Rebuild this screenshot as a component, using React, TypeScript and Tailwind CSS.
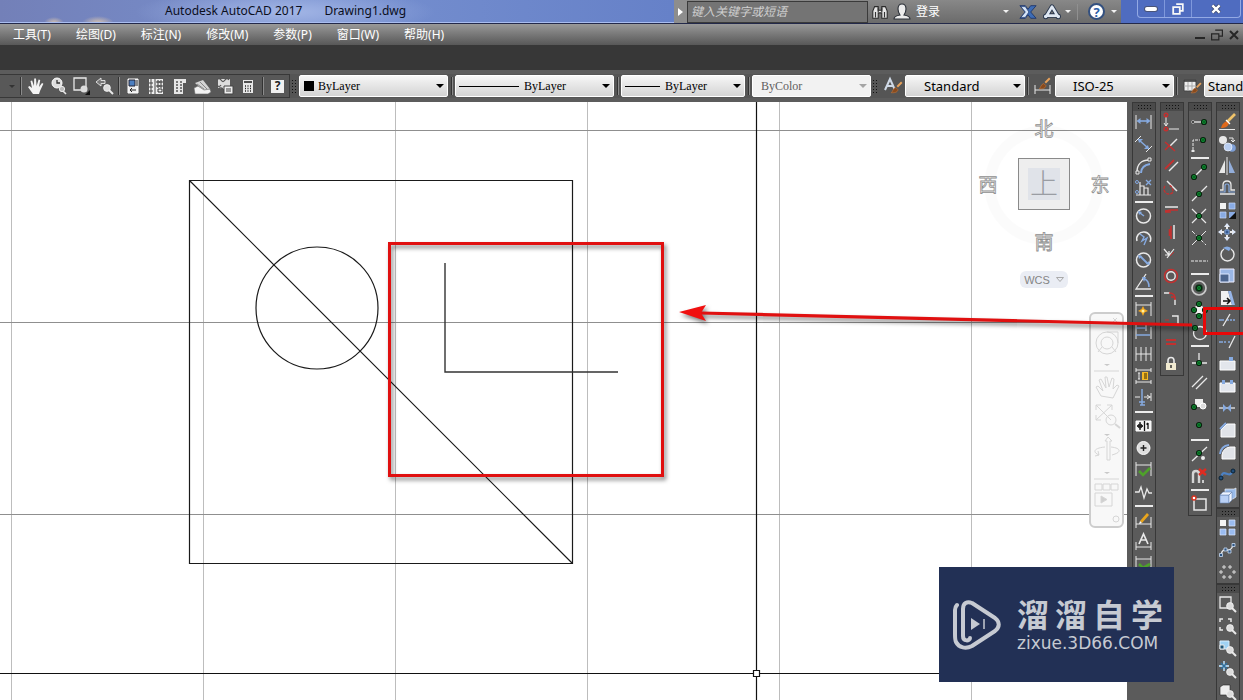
import React from "react";

type Icon = { name: string; art: React.ReactNode };
type Item = Icon | "sep";

const W = "#e9e9e9";
const B = "#86aae0";
const R = "#c4302f";

const Node = ({ x, y }: { x: number; y: number }) => (
  <g>
    <circle cx={x} cy={y} r="2.5" fill="#0c9a35" stroke="#08210d" strokeWidth="1.2" />
    <circle cx={x} cy={y} r="0.8" fill="#08210d" />
  </g>
);

const Lens = ({ x = 12, y = 12 }: { x?: number; y?: number }) => (
  <g>
    <path d={`M${x + 2} ${y + 2}l4 4`} stroke={W} strokeWidth="2" />
    <circle cx={x} cy={y} r="3.4" fill="#dcdcdc" stroke="#f6f6f6" strokeWidth="0.8" />
  </g>
);

const Brush = () => (
  <g>
    <path d="M11 9l6-6" stroke="#e9a25a" strokeWidth="2.6" />
    <path d="M3 17c2-1 2-6 6-7l3 3c-1 4-5 4-9 4z" fill="#8a4a1c" stroke="#b5703a" strokeWidth="1" />
  </g>
);

const Ticks = ({ top = 3, bottom = 17 }: { top?: number; bottom?: number }) => (
  <path d={`M2 ${top}V${bottom}M17 ${top}V${bottom}`} stroke={W} />
);

const dimension: Item[] = [
  { name: "线性", art: <><Ticks /><path d="M4 9h11" stroke={B} strokeWidth="1.6" /><path d="M2.500 9l4-3v6zM16.500 9l-4-3v6z" fill={B} /></> },
  { name: "对齐", art: <><path d="M1 8l6-6M12 18l6-6" stroke={W} /><path d="M5 6l9 8" stroke={B} strokeWidth="1.5" /><path d="M4 5h5l-4 4zM15 15h-5l4-4z" fill={B} /></> },
  { name: "弧长", art: <><path d="M3 16C3 8 8 4 15 4" stroke={W} strokeWidth="1.4" /><path d="M7 17c0-5 3-8 9-9" stroke={B} strokeWidth="2" /><path d="M2 15h3v3H2zM14 2h3v3h-3z" fill="#555" stroke={W} /></> },
  { name: "坐标", art: <><path d="M6 4v13h11M6 8h4v9M10 10h4v7M2 17h4" stroke={W} strokeWidth="1.2" /><path d="M12 2l5 5M17 2l-5 5" stroke={B} strokeWidth="1.3" /><circle cx="3" cy="4" r="1.5" stroke={B} /><circle cx="3" cy="14" r="1.5" stroke={B} /></> },
  "sep",
  { name: "半径", art: <><circle cx="9.500" cy="10" r="7" stroke={W} strokeWidth="1.5" /><path d="M10 10L6 7" stroke={B} strokeWidth="1.5" /><path d="M4 5l4 1-3 3z" fill={B} /></> },
  { name: "折弯", art: <><path d="M3 13A7 7 0 1 1 16 14" stroke={W} strokeWidth="1.5" /><path d="M6 6l4 3-2 4 5-3-3 7" stroke={B} strokeWidth="1.4" /></> },
  { name: "直径", art: <><circle cx="9.500" cy="10" r="7" stroke={W} strokeWidth="1.5" /><path d="M6 6l8 8" stroke={B} strokeWidth="1.8" /><path d="M4 5l4 1-3 3zM16 15l-4-1 3-3z" fill={B} /></> },
  { name: "角度", art: <><path d="M12 2L2 17h15" stroke={W} strokeWidth="1.3" /><path d="M10 7c4 1 5 4 5 8" stroke={B} strokeWidth="1.6" /><path d="M8 5h4l-2 5z" fill={B} /></> },
  "sep",
  { name: "快速标注", art: <><Ticks top={2} bottom={16} /><path d="M2 5h15" stroke={W} /><path d="M9 6l1.500 3 3.500 2-3.500 1.500L9 16l-1.500-3.500L4 11l3.500-2z" fill="#f4a91d" /><circle cx="9" cy="11" r="1.5" fill="#fff3a6" /></> },
  { name: "基线", art: <><path d="M2 2v15M12 2v7M17 5v12" stroke={W} /><path d="M2 6h10M2 13h14" stroke={B} strokeWidth="1.5" /></> },
  { name: "连续", art: <path d="M2 3v14M7 3v14M12 3v14M17 3v14M2 10h15" stroke={W} /> },
  { name: "等距标注", art: <><path d="M2 2v4M17 2v4M2 14v4M17 14v4M2 4h15M2 16h15" stroke={W} /><path d="M8 6h6v8H8z" fill="#f5b824" /><path d="M10 8h3M10 10h3M10 12h3" stroke="#3b2b00" /><path d="M5 7v6M4 7h2M4 13h2" stroke={W} /></> },
  { name: "折断标注", art: <><path d="M1 9h5M10 9h7M17 5v8M13 7l3 2-3 2" stroke={W} /><path d="M8 1v16M5 14h6M6 17h5" stroke={B} strokeWidth="1.5" /></> },
  "sep",
  { name: "公差", art: <><path d="M2 5h15v10H2z" fill="#f2f2f2" stroke="#fff" /><path d="M10.500 5v10M3 10h6M6 6v8M14 7v6M12.500 8.500L14 7" stroke="#111" strokeWidth="1.3" /><circle cx="6" cy="10" r="2" stroke="#111" /></> },
  { name: "圆心标记", art: <><circle cx="9.500" cy="10" r="6.500" fill="#dedede" stroke="#fafafa" /><path d="M9.500 7v6M6.500 10h6" stroke="#222" strokeWidth="1.4" /></> },
  { name: "检验", art: <><Ticks top={2} bottom={16} /><path d="M2 5h15" stroke={W} /><path d="M5 11l4 4 7-7" stroke="#4ea12a" strokeWidth="2.6" /></> },
  { name: "折弯线性", art: <path d="M1 10h4l2-5 3 11 3-9 2 4h3" stroke={W} strokeWidth="1.3" /> },
  "sep",
  { name: "编辑标注", art: <><Ticks top={7} bottom={18} /><path d="M2 14h15" stroke={W} /><path d="M6 11l7-8 2 2-7 8z" fill="#e9a51d" /><path d="M6 11l-1 3 3-1z" fill="#fff" /></> },
  { name: "编辑标注文字", art: <><Ticks top={10} bottom={18} /><path d="M2 15h15" stroke={W} /><path d="M5 12L9.500 2 14 12M7 8h5" stroke={W} strokeWidth="1.7" /></> },
  { name: "标注更新", art: <><Ticks top={2} bottom={16} /><path d="M2 5h15" stroke={W} /><path d="M5 10l4 4 7-4" stroke="#4ea12a" strokeWidth="2.6" /></> },
];

const constraints: Item[] = [
  { name: "重合", art: <><path d="M4 5v9M2 11l2 3 2-3M7 17h10" stroke={W} /><circle cx="4" cy="3" r="1.800" stroke={R} strokeWidth="1.4" /><circle cx="4" cy="17" r="1.800" stroke={R} strokeWidth="1.4" /></> },
  { name: "垂直约束", art: <><path d="M15 5l-7 7" stroke={W} strokeWidth="1.5" /><path d="M3 8l10 9M3 16l5-5" stroke={R} strokeWidth="1.5" /></> },
  { name: "平行约束", art: <><path d="M16 6l-9 9" stroke={W} strokeWidth="1.5" /><path d="M12 4l-9 9" stroke={R} strokeWidth="1.8" /></> },
  { name: "相切", art: <><path d="M5 3l10 10" stroke={W} strokeWidth="1.5" /><path d="M3 8a4.500 4.500 0 1 0 8 6q0-5-4-7" stroke={R} strokeWidth="1.3" strokeDasharray="3 1" /></> },
  { name: "水平", art: <><path d="M3 7h13" stroke={W} strokeWidth="1.5" /><path d="M3 11l6-1h7M3 12h6" stroke={R} strokeWidth="1.600" /></> },
  { name: "竖直", art: <><path d="M12 3v14" stroke={W} strokeWidth="1.5" /><path d="M9 4v13M7.500 7v7" stroke={R} strokeWidth="1.600" /></> },
  { name: "共线", art: <><path d="M2 5l5 6M7 7v4H3M12 5l-7 9" stroke={W} strokeWidth="1.2" /><path d="M8 12l4-4" stroke={R} /></> },
  { name: "同心", art: <><circle cx="9" cy="10" r="6.500" stroke={R} strokeWidth="1.500" /><circle cx="9" cy="10" r="4.200" stroke={W} strokeWidth="1.4" /></> },
  { name: "平滑", art: <><path d="M2 5h6M13 11v6" stroke={W} strokeWidth="1.4" /><path d="M7 5c5 0 6 2 6 7M9 9h4" stroke={R} strokeWidth="1.6" /></> },
  { name: "对称", art: <><path d="M10 6h6v8" stroke={W} strokeWidth="1.4" /><path d="M3 10h4M3 14h4" stroke={R} /></> },
  { name: "相等", art: <path d="M4 8h10M4 12h10" stroke={R} strokeWidth="2" /> },
  { name: "固定", art: <><path d="M6 10V6.500a3 3 0 0 1 6 0V10" stroke={W} strokeWidth="1.6" /><path d="M4 9h10v7H4z" fill="#f1ead0" /><path d="M9 11v3" stroke="#333" strokeWidth="1.5" /></> },
];

const snaps: Item[] = [
  { name: "临时追踪点", art: <><path d="M4 10h9" stroke={W} strokeWidth="1.3" /><circle cx="3" cy="10" r="1.5" fill="#222" stroke={W} strokeWidth="0.6" /><Node x={14} y={10} /></> },
  { name: "捕捉自", art: <><path d="M12 6H3v11" stroke={W} strokeDasharray="3 1" /><path d="M1.500 16h3v2h-3z" fill={W} /><Node x={13} y={6} /></> },
  "sep",
  { name: "端点", art: <><path d="M4 15L15 4" stroke={W} strokeWidth="1.4" /><Node x={4} y={15} /><Node x={14} y={5} /></> },
  { name: "中点", art: <><path d="M2 17L17 2" stroke={W} strokeWidth="1.2" /><Node x={9} y={10} /></> },
  { name: "交点", art: <><path d="M2 3l14 14M16 3L2 17" stroke={W} strokeWidth="1.2" /><Node x={9} y={10} /></> },
  { name: "外观交点", art: <><path d="M2 3l14 14" stroke={W} strokeDasharray="4 2" /><path d="M16 3L2 17" stroke={W} /><Node x={9} y={10} /></> },
  { name: "延长线", art: <path d="M1 11h17" stroke={W} strokeWidth="1.2" strokeDasharray="3 1" /> },
  "sep",
  { name: "圆心", art: <><circle cx="9" cy="10" r="7" stroke="#c9c9c9" strokeWidth="1.7" /><circle cx="9" cy="10" r="3.800" fill="#173d22" /><Node x={9} y={10} /></> },
  { name: "象限点", art: <><circle cx="9" cy="10" r="5" fill="#f0f0f0" /><Node x={9} y={4} /><Node x={9} y={16} /><Node x={4} y={10} /><Node x={15} y={10} /></> },
  { name: "切点", art: <><circle cx="10" cy="11" r="6.500" stroke={W} strokeWidth="1.3" /><Node x={5} y={6} /></> },
  "sep",
  { name: "垂足", art: <><path d="M9 3v10M2 13h15" stroke={W} strokeWidth="1.3" /><Node x={9} y={13} /></> },
  { name: "平行线", art: <path d="M2 15L13 4M6 17L17 6" stroke={W} strokeWidth="1.3" /> },
  { name: "插入点", art: <><path d="M5 5h8v8H5z" fill="#eee" /><circle cx="13" cy="12" r="3" fill="#ddd" stroke="#fff" /><Node x={4} y={13} /></> },
  { name: "节点", art: <Node x={9} y={9} /> },
  "sep",
  { name: "最近点", art: <><path d="M2 17L17 3" stroke={W} strokeWidth="1.3" /><circle cx="13" cy="14" r="2" fill="#eee" /><Node x={9} y={9} /></> },
  { name: "无捕捉", art: <><path d="M3 17V8q0-3 3-3t3 3v9" stroke="#d4d4d4" strokeWidth="2.4" /><path d="M9 3l7 6M16 3l-7 6" stroke="#e02b20" strokeWidth="2.4" /><path d="M12 14h2v3h-2z" fill="#ccc" /></> },
  "sep",
  { name: "对象捕捉设置", art: <><path d="M4 5h12v11H4z" stroke={W} strokeWidth="1.5" /><circle cx="4" cy="4" r="2" fill="#fff" stroke="#d8321f" strokeWidth="1.4" /></> },
];

const modify: Item[] = [
  { name: "删除", art: <><path d="M9 10l8-8" stroke="#f0c36a" strokeWidth="2.6" /><path d="M3 16c1-4 3-6 6-7l2 2c-1 4-4 5-8 5z" fill="#e06a1c" /><path d="M8 8l4 4" stroke="#fff" strokeWidth="1.3" /><path d="M1 17.500h16" stroke={W} /></> },
  { name: "复制", art: <><circle cx="5" cy="6" r="4" fill="#e8e8e8" /><circle cx="14" cy="14" r="3.800" fill="#7e9fd6" /><circle cx="10" cy="13" r="4" fill="#b8cdf0" stroke="#f0f5ff" strokeWidth="0.7" /><path d="M11 4h4v3M13 6l2 2 2-2" stroke={W} /></> },
  { name: "镜像", art: <><path d="M7 4v13H1z" fill="#e9e9e9" /><path d="M11 4v13h6z" fill="#93aedb" /><path d="M9 1v18" stroke={W} /></> },
  { name: "偏移", art: <><path d="M2 16h15M2 12h3V7q0-4 4-4t4 4v5h4" stroke={W} strokeWidth="1.3" /><path d="M2 14h5V8q0-2 2-2t2 2v6h6" stroke={B} strokeWidth="1.2" /></> },
  { name: "阵列", art: <><path d="M2 3h6v6H2z" fill="#f2f2f2" /><path d="M11 3h6v6h-6zM2 12h6v6H2z" fill="#89abe4" stroke="#c6d9fb" strokeWidth="0.7" /><path d="M11 12h6v6h-6z" fill="#89abe4" /><path d="M18 12v7h-7z" fill="#111" /></> },
  { name: "移动", art: <><path d="M9 1l3 4H6zM9 19l3-4H6zM0 10l4-3v6zM18 10l-4-3v6z" fill="#dfe9fb" /><path d="M9 4v3M9 13v3M3 10h3M12 10h3" stroke={W} strokeWidth="2" /><path d="M7 8h4v4H7z" fill="#35598f" stroke={B} /></> },
  { name: "旋转", art: <><path d="M6 5a6.500 6.500 0 1 0 7 0" stroke={W} strokeWidth="1.4" /><path d="M5 4q4-3 8 0l-2 3z" fill={B} /></> },
  { name: "缩放", art: <><path d="M2 3h14v13H2z" fill="#9bb7e5" stroke="#eef" /><path d="M2 8h9v8H2z" fill="#4c658e" stroke="#dbe7ff" /></> },
  { name: "拉伸", art: <><path d="M3 3h7l4 14H3z" fill="#f1f1f1" /><path d="M10 3h3l4 14h-3z" fill="#97b5e8" /><path d="M5 13h7M9 10l3 3-3 3" stroke="#111" strokeWidth="1.5" /></> },
  { name: "修剪", art: <><path d="M1 10h5M9 10h2M12 10h2M15 10h2" stroke={B} strokeWidth="1.3" /><path d="M5 16l7-12" stroke={W} strokeWidth="1.3" /></> },
  { name: "延伸", art: <><path d="M1 10h4M6 10h2M10 10h2" stroke={B} strokeWidth="1.500" /><path d="M11 16l6-12" stroke={W} strokeWidth="1.3" /></> },
  { name: "打断于点", art: <><path d="M2 7h15v9H2z" fill="#e3e6ec" stroke="#fff" /><path d="M11 3h4v4h-4z" fill={B} /></> },
  { name: "打断", art: <><path d="M2 7h15v9H2z" fill="#e3e6ec" stroke="#fff" /><path d="M4 4h3v4H4zM12 4h3v4h-3z" fill={B} /></> },
  { name: "合并", art: <><path d="M1 10h16" stroke={W} strokeWidth="1.3" /><path d="M5 6l4 4-4 4zM13 6l-4 4 4 4z" fill={B} /></> },
  { name: "倒角", art: <><path d="M3 17v-7l6-6h8v13z" fill="#e0e3e8" stroke="#fff" /><path d="M2 9l6-6" stroke={B} strokeWidth="2" /></> },
  { name: "圆角", art: <><path d="M4 17v-4q1-7 8-8h5v12z" fill="#e0e3e8" stroke="#fff" /><path d="M2 12q1-8 9-9" stroke={B} strokeWidth="2" /></> },
  { name: "光顺曲线", art: <><path d="M3 14C5 2 12 17 15 6" stroke="#4d82c5" strokeWidth="2.2" /><circle cx="3" cy="14" r="2" fill="#204d7a" stroke="#0c2234" /><circle cx="15" cy="7" r="2" fill="#204d7a" stroke="#0c2234" /></> },
  { name: "分解", art: <><path d="M7 3h9l2-1v9l-3 2H7z" fill="#9abbe9" stroke="#eee" strokeWidth="0.7" /><path d="M2 9h9v8H2z" fill="#b9d0f5" stroke="#6a86b5" strokeWidth="0.600" /><path d="M2 9l3-3h9l-3 3zM11 9l3-3v8l-3 3z" fill="#eef4ff" stroke="#6a86b5" strokeWidth="0.600" /></> },
];

const modify2: Item[] = [
  { name: "编辑阵列", art: <><path d="M2 2h6v6H2z" fill="#f6f6f6" /><path d="M11 2h6v6h-6zM2 11h6v6H2zM11 11h6v6h-6z" fill="#9bbcf0" stroke="#dbe8ff" strokeWidth="0.7" /></> },
  { name: "编辑样条曲线", art: <><path d="M3 15C5 4 12 16 15 5" stroke={W} strokeWidth="1.3" /><path d="M1.500 13.500h3v3h-3zM6 8h3v3H6zM10 10h3v3h-3zM14 3.500h3v3h-3z" fill="#2d5582" stroke="#c9dbf2" strokeWidth="0.8" /></> },
  { name: "编辑图案", art: <path d="M5 4h2v2H5zM11 4h2v2h-2zM2 9h2v2H2zM15 9h2v2h-2zM5 14h2v2H5zM11 14h2v2h-2z" fill="#555" stroke={W} strokeWidth="0.9" /> },
];

const zooms: Item[] = [
  { name: "窗口缩放", art: <><path d="M2 3h11v11H2z" stroke={W} strokeWidth="1.300" /><Lens /></> },
  { name: "动态缩放", art: <><path d="M2 6V3h3M10 3h3v3M2 11v3h3" stroke={W} strokeWidth="1.500" /><Lens /></> },
  { name: "比例缩放", art: <><path d="M2 3h9v8H2z" fill="#9fd2f4" stroke="#d9efff" /><path d="M2 7h4v4H2z" fill="#1d5577" stroke={W} /><Lens /></> },
  { name: "中心缩放", art: <><path d="M6 1v10M1 6h10" stroke="#a9cbe4" strokeWidth="1.800" /><path d="M3 3l6 6M9 3L3 9" stroke="#2f6f9d" strokeWidth="1.500" /><Lens /></> },
  { name: "缩放对象", art: <><path d="M2 5l3-2h7v8l-3 2H2z" fill="#eee" stroke="#222" strokeWidth="0.600" /><Lens /></> },
];

const viewTools: Icon[] = [
  { name: "实时平移", art: <path d="M7 18L2 11l1.500-1L6 12 4.500 5l1.600-.4L8 10l.2-7.500h1.800L10.600 10l2-6.500 1.600.4L13 11l3-4 1.400.8L14 15l-1 3z" fill="#f3f3f3" /> },
  { name: "实时缩放", art: <><circle cx="8" cy="7" r="5" fill="#dedede" stroke="#fff" /><path d="M8 4v3h3" stroke="#333" strokeWidth="1.3" /><path d="M14 15l3 3" stroke={W} strokeWidth="1.6" /><circle cx="13" cy="13" r="2.600" fill="#bbb" stroke="#eee" /></> },
  { name: "窗口缩放", art: <><path d="M2 2h12v12H2z" stroke={W} strokeWidth="1.300" /><circle cx="12" cy="13" r="3.500" fill="#ddd" /><path d="M18 14v5h-5z" fill="#111" /></> },
  { name: "缩放上一个", art: <><path d="M1 6l5-4v2.500h4v3H6V10z" fill="#777" stroke={W} strokeWidth="0.900" /><Lens /></> },
];

const paletteTools: Icon[] = [
  { name: "特性", art: <><path d="M5 3h10v14H5z" fill="#eee" stroke="#fff" /><path d="M6 4h6v6H6z" fill="#4c7fc0" stroke="#223" /><path d="M7 14h6M7 14l2-2M7 14l2 2M14 4v6" stroke="#222" /></> },
  { name: "设计中心", art: <><path d="M3 3h14v15H3z" fill="#eee" /><path d="M5 3v15M9 3v15M3 7h4M3 11h4M3 15h4" stroke="#444" /><path d="M11 5h2v2h-2zM14 5h2v2h-2zM11 9h2v2h-2zM14 9h2v2h-2zM12 13h4v3h-4z" stroke="#333" /></> },
  { name: "工具选项板", art: <><path d="M5 3h9v15H5zM14 3h3v4h-3z" fill="#e6e6e6" /><path d="M7 6h2M11 6h2M7 9h2M11 9h2M7 12h2M11 12h2M7 15h2M11 15h2" stroke="#555" strokeWidth="1.500" /></> },
  { name: "图纸集管理器", art: <><path d="M3 7l8-3 7 9-5 3z" fill="#d4d4d4" /><path d="M2 12l4-2 6 4 6-1 1 3-3 2H3z" fill="#f2f2f2" stroke="#666" strokeWidth="0.600" /><path d="M5 8l7 5M8 6l7 7" stroke="#666" strokeWidth="0.700" /></> },
  { name: "标记集管理器", art: <><path d="M3 3h12v10H3z" fill="#ddd" /><path d="M2 4q2-3 4 0t4 0 4 0M2 9q2 3 4 0M3 13q3-2 5 0" stroke="#555" strokeWidth="1.300" /><path d="M9 10h9v8H9z" fill="#eee" stroke="#444" /><path d="M11 13h5M11 15h5" stroke="#444" /></> },
  { name: "快速计算器", art: <><path d="M5 4h10v13H5z" fill="#e8e8e8" /><path d="M6 6h8" stroke="#333" strokeWidth="1.700" /><path d="M7 10h1M9.500 10h1M12 10h1M7 12.500h1M9.500 12.500h1M12 12.500h1M7 15h1M9.500 15h1M12 15h1" stroke="#222" strokeWidth="1.300" /></> },
];

const Art = ({ children, size = "size-5" }: { children: React.ReactNode; size?: string }) => (
  <svg viewBox="0 0 20 20" fill="none" className={size} aria-hidden="true">{children}</svg>
);

const gripDots = "bg-[radial-gradient(circle,#111_40%,transparent_45%)] bg-[length:3px_3px]";

const ToolColumn = ({ label, items }: { label: string; items: Item[] }) => (
  <div role="toolbar" aria-label={label} aria-orientation="vertical" className="flex w-6 shrink-0 flex-col border border-[#383838]">
    <div className="flex h-2 shrink-0 items-center justify-center bg-[#4a4a4a]">
      <span className={`h-1.5 w-[15px] ${gripDots}`} />
    </div>
    {items.map((item, i) =>
      item === "sep" ? (
        <div key={i} className="flex h-1.5 shrink-0 items-center px-0.5"><span className="h-0.5 w-full bg-[#ececec]" /></div>
      ) : (
        <button key={i} type="button" aria-label={item.name} className="flex h-[22px] shrink-0 items-center justify-center">
          <Art>{item.art}</Art>
        </button>
      ),
    )}
  </div>
);

const RowTool = ({ icon }: { icon: Icon }) => (
  <button type="button" aria-label={icon.name} className="flex w-[23px] shrink-0 items-center justify-center"><Art>{icon.art}</Art></button>
);

const RowSep = () => <span className="h-[18px] w-0.5 shrink-0 self-center border-l border-[#333] bg-[#8b8b8b]" />;

const Grip = () => <span className={`mx-px h-[15px] w-1.5 shrink-0 self-center ${gripDots}`} />;

const Combo = ({ label, value, width, pad, font = "text-[12px] font-['Liberation_Serif',serif]", lead, disabled }: {
  label: string; value: string; width: string; pad: string; font?: string; lead?: React.ReactNode; disabled?: boolean;
}) => (
  <div className={`relative shrink-0 ${width}`}>
    <select
      aria-label={label}
      disabled={disabled}
      defaultValue={value}
      className={`block h-[22px] w-full appearance-none rounded-[2px] border border-white leading-4 opacity-100 ${pad} ${font} ${disabled ? "bg-[#f2f2f2] text-[#606060]" : "bg-linear-to-b from-[#f6f6f6] to-[#d4d4d4] text-black"}`}
    >
      <option>{value}</option>
    </select>
    {lead}
    <svg viewBox="0 0 8 4" className="pointer-events-none absolute top-[9px] right-1 h-1 w-2" aria-hidden="true">
      <path d="M0 0h8L4 4z" fill={disabled ? "#a5a5a5" : "#000"} />
    </svg>
  </div>
);

const ui = "font-['Noto_Sans','Noto_Sans_CJK_SC',sans-serif]";

const Down = () => <svg viewBox="0 0 6 3" className="h-[3px] w-1.5" aria-hidden="true"><path d="M0 0h6L3 3z" fill="#f2f2f2" /></svg>;

const TitleBar = () => (
  <header className="flex h-6 shrink-0 overflow-hidden border-b border-[#23294a] bg-linear-to-r from-[#7380b8] via-[#7790cf] via-25% to-[#4c69bd] text-[#0b0f1d]">
    <h1 className="flex min-w-0 flex-1 items-center gap-[22px] border-b border-[#a9bdf0] bg-[radial-gradient(ellipse_10px_6px_at_54px_23px,#d8c4b0,transparent),radial-gradient(ellipse_16px_7px_at_98px_23px,#d8c4b0,transparent),radial-gradient(ellipse_150px_24px_at_285px_12px,#a3b6e6,transparent)] pl-[165px] text-[12px] leading-4">
      <span>Autodesk AutoCAD 2017</span>
      <span>Drawing1.dwg</span>
    </h1>
    <div className="flex w-[447px] shrink-0 items-center bg-linear-to-b from-[#888] to-[#6b6b6b]">
      <button type="button" aria-label="展开" className="flex h-full w-[13px] items-center justify-center bg-[#8d8d8d]">
        <svg viewBox="0 0 5 8" className="h-2 w-[5px]" aria-hidden="true"><path d="M0 0v8l5-4z" fill="#fff" /></svg>
      </button>
      <input aria-label="搜索" placeholder="键入关键字或短语" className="h-[22px] w-[181px] border border-[#3a3a3a] bg-[#747474] px-[3px] text-[12px] italic placeholder:text-[#cfcfcf]" />
      <button type="button" aria-label="搜索" className="flex w-6 justify-center">
        <Art size="size-[18px]"><path d="M2 17V9l2-5h4v4h4V4h4l2 5v8h-6v-6H8v6z" fill="#e6e6e6" stroke="#2a2a2a" strokeWidth="1.2" /><path d="M5 10v6M15 10v6M8 5v5M12 5v5" stroke="#333" strokeWidth="1.3" /></Art>
      </button>
      <button type="button" className="flex items-center gap-1 text-[12px] leading-4 text-white">
        <Art><path d="M2 17q0-3 6-4-2-3-2-6 0-5 4-5t4 5q0 3-2 6 6 1 6 4z" fill="#ececec" stroke="#2b3038" strokeWidth="1.1" /></Art>
        登录
      </button>
      <div className="ml-auto flex items-center gap-1.5 pr-1">
        <Down />
        <button type="button" aria-label="Exchange" className="ml-1">
          <Art size="size-[18px]"><path d="M1 3h6l3 4 3-4h6l-6 7 6 7h-6l-3-4-3 4H1l6-7z" fill="#3d6cb5" stroke="#1f376b" /><path d="M2 4h5l4 6-4 6H2l5-6z" fill="#d7e5f8" stroke="#223c70" strokeWidth="0.800" /></Art>
        </button>
        <button type="button" aria-label="A360" className="flex items-center gap-1">
          <Art size="size-[18px]"><path d="M10 4l6 10H4z" stroke="#28364d" strokeWidth="5" strokeLinejoin="round" /><path d="M3 15h.01M17 15h.01" stroke="#28364d" strokeWidth="6" strokeLinecap="round" /><path d="M10 4l6 10H4z" stroke="#dfe7f2" strokeWidth="3" strokeLinejoin="round" /><path d="M3 15h.01M17 15h.01" stroke="#dfe7f2" strokeWidth="4" strokeLinecap="round" /></Art>
          <Down />
        </button>
        <span className="h-4 w-px bg-[#909090]" />
        <button type="button" aria-label="帮助" className="ml-1 flex items-center gap-1.5">
          <span className="flex size-[17px] items-center justify-center rounded-full border-2 border-[#33507f] bg-white text-[13px] leading-4 font-bold text-[#2c5da8]">?</span>
          <Down />
        </button>
      </div>
    </div>
    <div className="flex w-[122px] shrink-0 items-start justify-end bg-[#4f6cc0] pr-0.5">
      <div className="flex h-[18px] w-[104px] rounded-b border border-t-0 border-[#93a9e4] text-white">
        <button type="button" aria-label="最小化" className="flex w-[27px] items-center justify-center border-r border-[#7f98dc]"><span className="h-1 w-3 rounded-xs bg-white ring-1 ring-[#4a5478]" /></button>
        <button type="button" aria-label="还原" className="flex w-[27px] items-center justify-center border-r border-[#7f98dc]">
          <Art size="size-3"><path d="M7 2h11v11h-4M2 7h11v11H2z" stroke="#f8f8f8" strokeWidth="3" /></Art>
        </button>
        <button type="button" aria-label="关闭" className="flex flex-1 items-center justify-center"><Art size="size-3"><path d="M4 4l12 12M16 4L4 16" stroke="#3b4567" strokeWidth="6.500" /><path d="M4 4l12 12M16 4L4 16" stroke="#fff" strokeWidth="4" /></Art></button>
      </div>
    </div>
  </header>
);

const menus = ["工具(T)", "绘图(D)", "标注(N)", "修改(M)", "参数(P)", "窗口(W)", "帮助(H)"];

const MenuBar = () => (
  <nav aria-label="菜单" className="flex h-[21px] shrink-0 items-center gap-[25px] bg-linear-to-b from-[#999] to-[#585858] pl-[13px] text-[12px] leading-4 text-white">
    {menus.map((m) => <button key={m} type="button" className="shrink-0">{m}</button>)}
    <div className="mr-1 ml-auto flex items-center gap-1.5">
      <button type="button" aria-label="最小化图形" className="pt-1.5"><span className="block h-0.5 w-2.5 bg-[#262626]" /></button>
      <button type="button" aria-label="还原图形"><Art size="size-3"><path d="M7 2h12v10h-6M1 8h12v10H1z" stroke="#262626" strokeWidth="2" /></Art></button>
      <button type="button" aria-label="关闭图形"><Art size="size-2.5"><path d="M2 2l16 16M18 2L2 18" stroke="#262626" strokeWidth="4" /></Art></button>
    </div>
  </nav>
);

const sansCombo = "text-[13px]";

const PropertyBar = () => (
  <div className="flex h-8 shrink-0 items-center overflow-hidden border-t-4 border-b-4 border-[#5c5c5c] bg-[#555]">
    <div role="toolbar" aria-label="标准" className="flex h-6 shrink-0 border-y border-r border-[#383838] bg-[#585858]">
      <button type="button" aria-label="重做选项" className="flex w-5 items-center justify-center pl-1"><svg viewBox="0 0 6 3" className="h-[3px] w-1.5" aria-hidden="true"><path d="M0 0h6L3 3z" fill="#333" /></svg></button>
      <RowSep />
      <div className="flex pl-0.5">{viewTools.map((t) => <RowTool key={t.name} icon={t} />)}</div>
      <div className="flex w-[5px] justify-center"><RowSep /></div>
      <div className="flex">{paletteTools.map((t) => <RowTool key={t.name} icon={t} />)}</div>
      <div className="flex w-[7px] justify-center"><RowSep /></div>
      <button type="button" aria-label="帮助" className="flex w-[23px] items-center justify-center">
        <span className="flex size-[13px] items-center justify-center bg-[#f0f0f0] text-[12px] leading-3 font-bold text-[#222]">?</span>
      </button>
    </div>
    <Grip />
    <div role="toolbar" aria-label="特性" className="flex shrink-0 items-center pl-px">
      <Combo label="颜色" value="ByLayer" width="w-[149px]" pad="pl-[18px]" lead={<span className="pointer-events-none absolute top-1.5 left-[5px] size-2.5 bg-black" />} />
      <div className="flex w-[7px] justify-center"><RowSep /></div>
      <Combo label="线型" value="ByLayer" width="w-[159px]" pad="pl-[68px]" lead={<span className="pointer-events-none absolute top-[11px] left-1 h-px w-[60px] bg-black" />} />
      <div className="flex w-[7px] justify-center"><RowSep /></div>
      <Combo label="线宽" value="ByLayer" width="w-[124px]" pad="pl-[43px]" lead={<span className="pointer-events-none absolute top-[11px] left-1 h-px w-[35px] bg-black" />} />
      <div className="flex w-[7px] justify-center"><RowSep /></div>
      <Combo label="打印样式" value="ByColor" width="w-[119px]" pad="pl-2" disabled />
    </div>
    <Grip />
    <div role="toolbar" aria-label="样式" className="flex shrink-0 items-center pl-0.5">
      <button type="button" aria-label="文字样式" className="flex w-6 justify-center"><Art><path d="M2 14L7 3l5 11M4 10h6" stroke="#cfd9e6" strokeWidth="2" /><g transform="translate(6 4) scale(.75)"><Brush /></g></Art></button>
      <Combo label="文字样式" value="Standard" width="w-[120px]" pad="pl-[18px]" font={sansCombo} />
      <div className="flex w-[5px] justify-center"><RowSep /></div>
      <button type="button" aria-label="标注样式" className="flex w-[25px] justify-center"><Art><path d="M2 9v9M17 9v9M2 14h15" stroke={W} /><g transform="translate(4 0) scale(.75)"><Brush /></g></Art></button>
      <Combo label="标注样式" value="ISO-25" width="w-[119px]" pad="pl-[17px]" font={sansCombo} />
      <div className="flex w-[5px] justify-center"><RowSep /></div>
      <button type="button" aria-label="表格样式" className="flex w-[25px] justify-center"><Art><path d="M2 4h12v11H2z" fill="#eee" stroke="#444" /><path d="M2 5h12" stroke="#333" strokeWidth="1.500" /><path d="M2 10h12M6 6v9M10 6v9" stroke="#aaa" /><g transform="translate(7 5) scale(.7)"><Brush /></g></Art></button>
      <Combo label="表格样式" value="Standard" width="w-[120px]" pad="pl-[3px]" font={sansCombo} />
    </div>
  </div>
);

const gridX = [11.5, 203.5, 395.5, 587.5, 779.5, 971.5];
const gridY = [28.5, 220.5, 412.5];

const Drawing = () => (
  <svg width="2400" height="1600" className="absolute top-0 left-0" fill="none" role="img" aria-label="Drawing1">
    {gridX.map((x) => <path key={x} d={`M${x} 0V1600`} stroke="#bdbdbd" />)}
    {gridY.map((y) => <path key={y} d={`M0 ${y}H2400`} stroke="#8f8f8f" />)}
    <g stroke="#1a1a1a" strokeWidth="1.2">
      <path d="M189.500 78.500H572.500V461.500H189.500zL572.500 461.500" />
      <circle cx="317" cy="206" r="61" />
      <path d="M445 161v109h173" stroke="#333" strokeWidth="1.4" />
    </g>
    <path d="M756.500 0V568M756.500 575V1600M0 571.500H753M760 571.500H2400" stroke="#111" strokeWidth="1.2" />
    <path d="M753.500 568.500h6v6h-6z" fill="#fff" stroke="#111" strokeWidth="1.2" />
  </svg>
);

const ViewCube = () => (
  <div className="absolute top-2 right-[15px] flex w-[136px] flex-col items-center">
    <svg viewBox="0 -8 136 154" className="w-full" role="img" aria-label="ViewCube" fontFamily="'Noto Sans CJK SC', sans-serif" textAnchor="middle">
      <circle cx="68" cy="67" r="54" fill="none" stroke="#000" strokeOpacity="0.014" strokeWidth="11" />
      <rect x="42.500" y="40.500" width="51" height="51" fill="#eeeeee" stroke="#8a8a8a" />
      <rect x="52" y="50" width="32" height="32" fill="#e0e3e9" />
      <text x="68" y="76" fontSize="28" fontWeight="300" fill="#9a9da3">上</text>
      <g fontSize="19" fill="#fff" stroke="#8e8e8e" strokeWidth="0.8">
        <text x="68" y="18">北</text>
        <text x="12" y="74">西</text>
        <text x="124" y="74">东</text>
        <text x="68" y="131">南</text>
      </g>
    </svg>
    <button type="button" className="mt-[7px] flex h-[17px] w-12 items-center justify-center gap-1.5 rounded-md bg-[#eaedf4] font-['Liberation_Sans',sans-serif] text-[11px] leading-4 text-[#858585]">
      WCS
      <svg viewBox="0 0 8 5" className="h-[5px] w-2" fill="none" aria-hidden="true"><path d="M.5.500h7L4 4.500z" stroke="#a9a9a9" /></svg>
    </button>
  </div>
);

const NavBar = () => (
  <div role="toolbar" aria-label="导航栏" className="absolute top-[210px] right-[3px] flex h-[216px] w-[35px] flex-col items-center overflow-hidden rounded-md border-2 border-[#cdcdcd] bg-[#f8f8f8]">
    <svg viewBox="0 0 31 211" className="w-full" fill="none" stroke="#d6d6d6" aria-hidden="true">
      <path d="M22 4l4 4M26 4l-4 4" />
      <path d="M5 29a11 11 0 1 1 11 11A11 11 0 0 1 5 29M16 18h11v11" /><circle cx="16" cy="29" r="6" /><path d="M11 33l-4 5M21 33l4 5" />
      <path d="M13 50h6l-3 2zM13 120h6l-3 2zM13 158h6l-3 2z" fill="#c8c8c8" stroke="none" />
      <path d="M3 57h25M3 165h25" />
      <path d="M10 82L5 73l2-1 5 5-4-11 2-1 5 9-1-11h2l2 10 3-9 2 1-1 10 4-4 2 1-6 12z" />
      <path d="M5 91l15 15M5 106l16-15M5 96v-5h5M16 91h5v5M5 101v5h5" /><circle cx="20" cy="106" r="5" /><path d="M24 110l5 4" strokeWidth="2" />
      <path d="M14 127l3-4 4 4h-2v19h-3v-19zM14 133c-11 1-13 5-6 8M7 137l1 4-4 1M20 133c10 1 10 5 4 7l-3 1" />
      <path d="M4 170h7v6H4zM12 170h7v6h-7zM20 170h7v6h-7zM4 179h17v13H4z" /><path d="M10 182v7l6-3.500z" fill="#d0d0d0" />
      <circle cx="25" cy="205" r="3" />
    </svg>
  </div>
);

const Watermark = () => (
  <aside className="absolute right-[69px] bottom-[18px] flex h-[115px] w-[235px] items-center gap-4 bg-[#223055] pl-[14px] text-[#c6cad2]">
    <svg viewBox="0 0 48 50" className="h-[50px] w-12 shrink-0" fill="none" aria-hidden="true">
      <path d="M17 38c0 3-7 4-7-2V9c0-6 4-8 9-6l23 15c5 4 5 9 0 13L19 46c-6 3-13 2-16-4-1-2-1-5-1-8V10c0-2 1-4 2-5" stroke="#c6cad2" strokeWidth="4" strokeLinecap="round" strokeLinejoin="round" />
      <path d="M18 18v12l9-6z" fill="#c6cad2" /><path d="M31 19v10" stroke="#c6cad2" strokeWidth="1.500" />
    </svg>
    <div className="flex flex-col gap-1 whitespace-nowrap">
      <span className="flex justify-between gap-1.5 font-['Noto_Sans_CJK_SC',sans-serif] text-[32px] leading-8 font-bold">
        {["溜", "溜", "自", "学"].map((c, i) => <span key={i}>{c}</span>)}
      </span>
      <span className="font-['DejaVu_Sans',sans-serif] text-[17px] leading-5">zixue.3D66.COM</span>
    </div>
  </aside>
);

const Annotations = () => (
  <svg width="1300" height="700" className="pointer-events-none absolute top-0 left-0" fill="none" aria-hidden="true">
    <g className="drop-shadow-[2px_3px_2px_rgba(0,0,0,0.5)]">
      <rect x="389.500" y="243.500" width="273" height="232" stroke="#e01010" strokeWidth="3" />
      <path d="M700 313L1192 325" stroke="#e01010" strokeWidth="3.200" />
      <path d="M679 312L706 305l-5 8 5 8z" fill="#f01010" />
    </g>
    <rect x="1204.500" y="308.500" width="60" height="25" stroke="#e80808" strokeWidth="3" />
  </svg>
);

export default function App() {
  return (
    <div className={`relative flex h-screen flex-col overflow-hidden bg-[#5b5b5b] ${ui}`}>
      <TitleBar />
      <MenuBar />
      <div className="h-[25px] shrink-0 bg-[#373737]" />
      <PropertyBar />
      <div className="flex min-h-0 flex-1">
        <main className="relative min-w-0 flex-1 overflow-hidden bg-white">
          <Drawing />
          <ViewCube />
          <NavBar />
        </main>
        <div className="flex shrink-0 items-start gap-1 overflow-hidden bg-[#5b5b5b] pr-[3px] pl-[5px]">
          <ToolColumn label="标注" items={dimension} />
          <ToolColumn label="几何约束" items={constraints} />
          <ToolColumn label="对象捕捉" items={snaps} />
          <div className="flex flex-col">
            <ToolColumn label="修改" items={modify} />
            <ToolColumn label="修改 II" items={modify2} />
            <ToolColumn label="缩放" items={zooms} />
          </div>
        </div>
      </div>
      <Watermark />
      <Annotations />
    </div>
  );
}
